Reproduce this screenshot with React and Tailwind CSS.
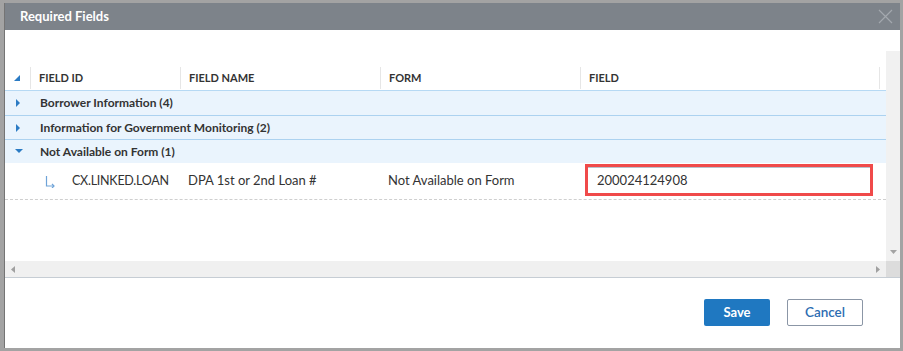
import React from 'react';

const COLS = [
  { key: 'expander', width: 'w-[25px]' },
  { key: 'FIELD ID', width: 'w-[150px]' },
  { key: 'FIELD NAME', width: 'w-[200px]' },
  { key: 'FORM', width: 'w-[200px]' },
  { key: 'FIELD', width: 'w-[299px]' },
];

const groups = [
  { label: 'Borrower Information (4)', open: false },
  { label: 'Information for Government Monitoring (2)', open: false },
  { label: 'Not Available on Form (1)', open: true },
];

const Caret = ({ open }) =>
  open ? (
    <svg width="8" height="5" viewBox="0 0 8 5" className="ml-[10px]">
      <path d="M0 0 H8 L4 4 Z" fill="#2b7bc4" />
    </svg>
  ) : (
    <svg width="5" height="8" viewBox="0 0 5 8" className="ml-[11px]">
      <path d="M0 0 L4 4 L0 8 Z" fill="#2b7bc4" />
    </svg>
  );

const App = () => {
  return (
    <div
      className="w-[903px] h-[351px] bg-[#a3a3a3] pt-[3px] pl-[4px] pr-[3px] pb-[3px]"
      style={{ fontFamily: 'Lato, "Open Sans", sans-serif' }}
    >
      <div className="flex flex-col h-full bg-white border-l border-[#747474]">
        {/* Title bar */}
        <div className="h-[27px] bg-[#7d838a] flex items-center justify-between pl-[15px] pr-[7px]">
          <span className="text-white text-[13px] font-bold">Required Fields</span>
          <svg width="15" height="15" viewBox="0 0 15 15">
            <path d="M1 1 L14 14 M14 1 L1 14" stroke="#a3a8ae" strokeWidth="1.2" />
          </svg>
        </div>

        {/* Grid */}
        <div className="pt-[21px]">
          <div className="flex h-[210px]">
            <div className="flex-1 pt-[15px] overflow-hidden">
              {/* header */}
              <div className="flex h-[25px] border-b border-[#b6d9f4] text-[11px] font-bold text-[#333] uppercase">
                {COLS.map((c, i) => (
                  <div key={c.key} className={`${c.width} flex items-center ${i > 0 ? 'pl-[8px] border-l border-[#e6e6e6] my-[1px]' : ''}`}>
                    {i === 0 ? (
                      <svg width="6" height="6" viewBox="0 0 6 6" className="ml-[9px]">
                        <path d="M6 0 V6 H0 Z" fill="#2b7bc4" />
                      </svg>
                    ) : (
                      c.key
                    )}
                  </div>
                ))}
                <div className="flex-1 border-l border-[#e6e6e6] my-[1px]" />
              </div>

              {/* group rows */}
              {groups.map((g, i) => (
                <div
                  key={g.label}
                  className={`flex items-center h-[24px] bg-[#eaf4fd] ${i > 0 ? 'border-t border-[#acd2f0]' : ''}`}
                >
                  <div className="w-[25px] flex items-center">
                    <Caret open={g.open} />
                  </div>
                  <span className="pl-[10px] text-[12px] font-bold text-[#333]">{g.label}</span>
                </div>
              ))}

              {/* data row */}
              <div className="flex items-center h-[37px] border-b border-dashed border-[#cfcfcf] text-[13px] text-[#333]">
                <div className="w-[25px]" />
                <div className="w-[150px] flex items-center pl-[15px]">
                  <svg width="10" height="12" viewBox="0 0 10 12" className="mt-[1px]">
                    <path d="M1.5 0 V10 H9" stroke="#6fa3d8" strokeWidth="1.2" fill="none" />
                    <path d="M7 8 L9 10 L7 12" stroke="#6fa3d8" strokeWidth="1.2" fill="none" />
                  </svg>
                  <span className="pl-[17px] text-[12.5px] tracking-[-0.02em]">CX.LINKED.LOAN</span>
                </div>
                <div className="w-[200px] pl-[8px]">DPA 1st or 2nd Loan #</div>
                <div className="w-[200px] pl-[8px]">Not Available on Form</div>
                <div className="w-[299px] pl-[5px] self-start pt-[1px]">
                  <div className="w-[288px] h-[32px] border-[3px] border-[#f04a4a] flex items-center">
                    <div className="w-full h-full border-t border-[#b8c2cc] flex items-center pl-[9px]">
                      200024124908
                    </div>
                  </div>
                </div>
              </div>
            </div>

            {/* vertical scrollbar */}
            <div className="w-[14px] bg-[#f1f1f1] flex flex-col justify-end items-center pb-[7px]">
              <svg width="7" height="4" viewBox="0 0 7 4">
                <path d="M0 0 H7 L3.5 4 Z" fill="#a3a3a3" />
              </svg>
            </div>
          </div>

          {/* horizontal scrollbar */}
          <div className="flex h-[17px] border-b border-[#c6cdd4]">
            <div className="flex-1 bg-[#f0f0f0] flex items-center justify-between pl-[6px] pr-[6px]">
              <svg width="4" height="7" viewBox="0 0 4 7">
                <path d="M4 0 V7 L0 3.5 Z" fill="#a0a0a0" />
              </svg>
              <svg width="4" height="7" viewBox="0 0 4 7">
                <path d="M0 0 V7 L4 3.5 Z" fill="#a0a0a0" />
              </svg>
            </div>
            <div className="w-[14px] bg-[#dcdcdc]" />
          </div>
        </div>

        {/* Footer */}
        <div className="flex-1 flex justify-end items-start pt-[21px] pr-[37px] gap-[17px]">
          <button className="w-[66px] h-[27px] rounded-[2px] bg-[#1f78c1] text-white text-[13px] font-bold">
            Save
          </button>
          <button className="w-[76px] h-[27px] rounded-[2px] bg-white border border-[#8b96a6] text-[#2c6db2] text-[13.5px] font-semibold">
            Cancel
          </button>
        </div>
      </div>
    </div>
  );
};

export default App;
